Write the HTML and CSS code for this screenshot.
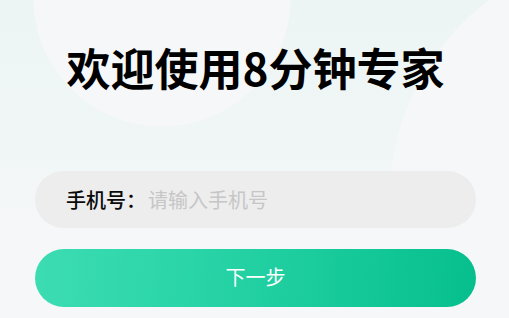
FILE: index.html
```html
<!DOCTYPE html>
<html lang="zh-CN">
<head>
    <meta charset="UTF-8">
    <meta name="viewport" content="width=device-width, initial-scale=1.0">
    <title>欢迎使用8分钟专家</title>
    <link rel="stylesheet" href="styles.css">
</head>
<body>
    <div class="page">
        <h1 class="title">欢迎使用8分钟专家</h1>

        <!-- 手机号输入 -->
        <div class="field">
            <span class="label">手机号：</span>
            <input class="phone" type="tel" placeholder="请输入手机号">
        </div>

        <button class="next">下一步</button>
    </div>
</body>
</html>
```

FILE: styles.css
```css
body {
    margin: 0;
    padding: 0;
    height: 100vh;
    font-family: "Noto Sans CJK SC", "Noto Sans", sans-serif;
    background-color: #f6f7f9;
    background-image:
        radial-gradient(circle at 162px -2px, #f6f7f9 128px, rgba(246, 247, 249, 0) 129px),
        radial-gradient(circle at 640px 200px, #f6f7f9 250px, rgba(246, 247, 249, 0) 251px),
        linear-gradient(to bottom, #edf5f4 0, #f0f6f6 150px, #f6f7f9 230px);
    background-repeat: no-repeat;
}

.page {
    padding: 0 33px 0 35px;
    display: flex;
    flex-direction: column;
}

.title {
    margin: 36px 0 0;
    font-size: 44px;
    line-height: 62px;
    font-weight: bold;
    color: #000;
    text-align: center;
}

.field {
    margin-top: 73px;
    height: 57px;
    border-radius: 29px;
    background-color: #ededed;
    display: flex;
    align-items: center;
    padding-left: 31px;
    font-size: 20px;
}

.label {
    color: #0a0a0a;
    font-weight: 500;
}

.phone {
    flex: 1;
    border: none;
    outline: none;
    background: transparent;
    padding: 0 0 0 2px;
    font-family: inherit;
    font-size: 20px;
    color: #333;
}

.phone::placeholder {
    color: #c6c6c6;
}

.next {
    margin-top: 21px;
    height: 58px;
    padding-bottom: 5px;
    border: none;
    border-radius: 29px;
    background: linear-gradient(95deg, #3ddcb2 0%, #2ad5a8 35%, #06bf8d 100%);
    color: #fff;
    font-family: inherit;
    font-size: 20px;
    cursor: pointer;
}
```
